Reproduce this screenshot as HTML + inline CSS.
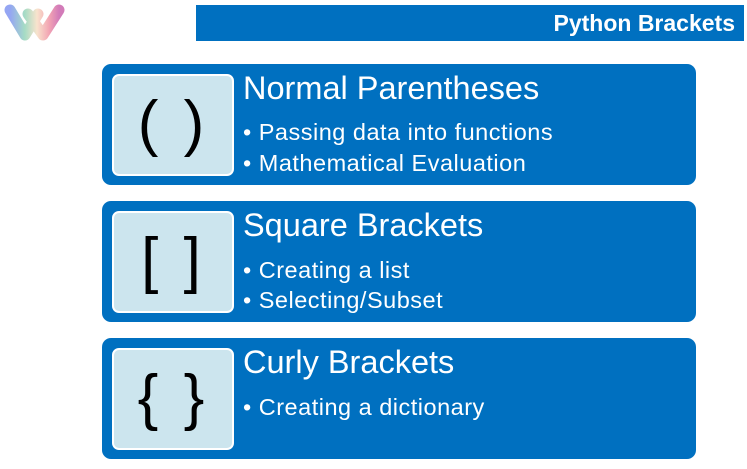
<!DOCTYPE html>
<html><head><style>
body{margin:0;width:747px;height:469px;background:#fff;position:relative;overflow:hidden;font-family:"Liberation Sans",sans-serif}
.hdr{position:absolute;left:196px;top:5px;width:548px;height:36px;background:#0070c0;color:#fff;font-weight:bold;font-size:23px;text-align:right;box-sizing:border-box;padding-right:9px;line-height:36px}
.card{position:absolute;left:102px;width:594px;height:121px;background:#0070c0;border-radius:9px}
.box{position:absolute;left:10px;top:10px;background:#cce5ee;border:2px solid #fff;border-radius:7px;box-sizing:border-box;width:122px;height:102px;text-align:center;font-family:"Liberation Sans",sans-serif;font-size:62px;line-height:96px;color:#000;letter-spacing:4px}
.t{position:absolute;left:141px;top:6px;color:#fff;font-size:32.5px}
.b{position:absolute;left:141px;color:#fff;font-size:23.5px;letter-spacing:0.5px}
</style></head><body>
<svg style="position:absolute;left:3px;top:2px" width="62" height="40" viewBox="0 0 62 40">
<defs><linearGradient id="g" x1="0" x2="1"><stop offset="0" stop-color="#7a8ff0"/><stop offset=".3" stop-color="#8fd3b6"/><stop offset=".55" stop-color="#f6dcc0"/><stop offset=".8" stop-color="#ef8da0"/><stop offset="1" stop-color="#c75aa7"/></linearGradient></defs>
<path d="M7 8 L22 33 L35 12 M25 12 L40 33 L56 8" fill="none" stroke="url(#g)" stroke-width="11" stroke-linecap="round" stroke-linejoin="round" opacity=".8"/>
</svg>
<div class="hdr">Python Brackets</div>
<div class="card" style="top:64px"><div class="box">( )</div><div class="t">Normal Parentheses</div><div class="b" style="top:55px">• Passing data into functions</div><div class="b" style="top:86px">• Mathematical Evaluation</div></div>
<div class="card" style="top:201px"><div class="box">[ ]</div><div class="t">Square Brackets</div><div class="b" style="top:56px">• Creating a list</div><div class="b" style="top:86px">• Selecting/Subset</div></div>
<div class="card" style="top:338px"><div class="box">{ }</div><div class="t">Curly Brackets</div><div class="b" style="top:56px">• Creating a dictionary</div></div>
</body></html>
